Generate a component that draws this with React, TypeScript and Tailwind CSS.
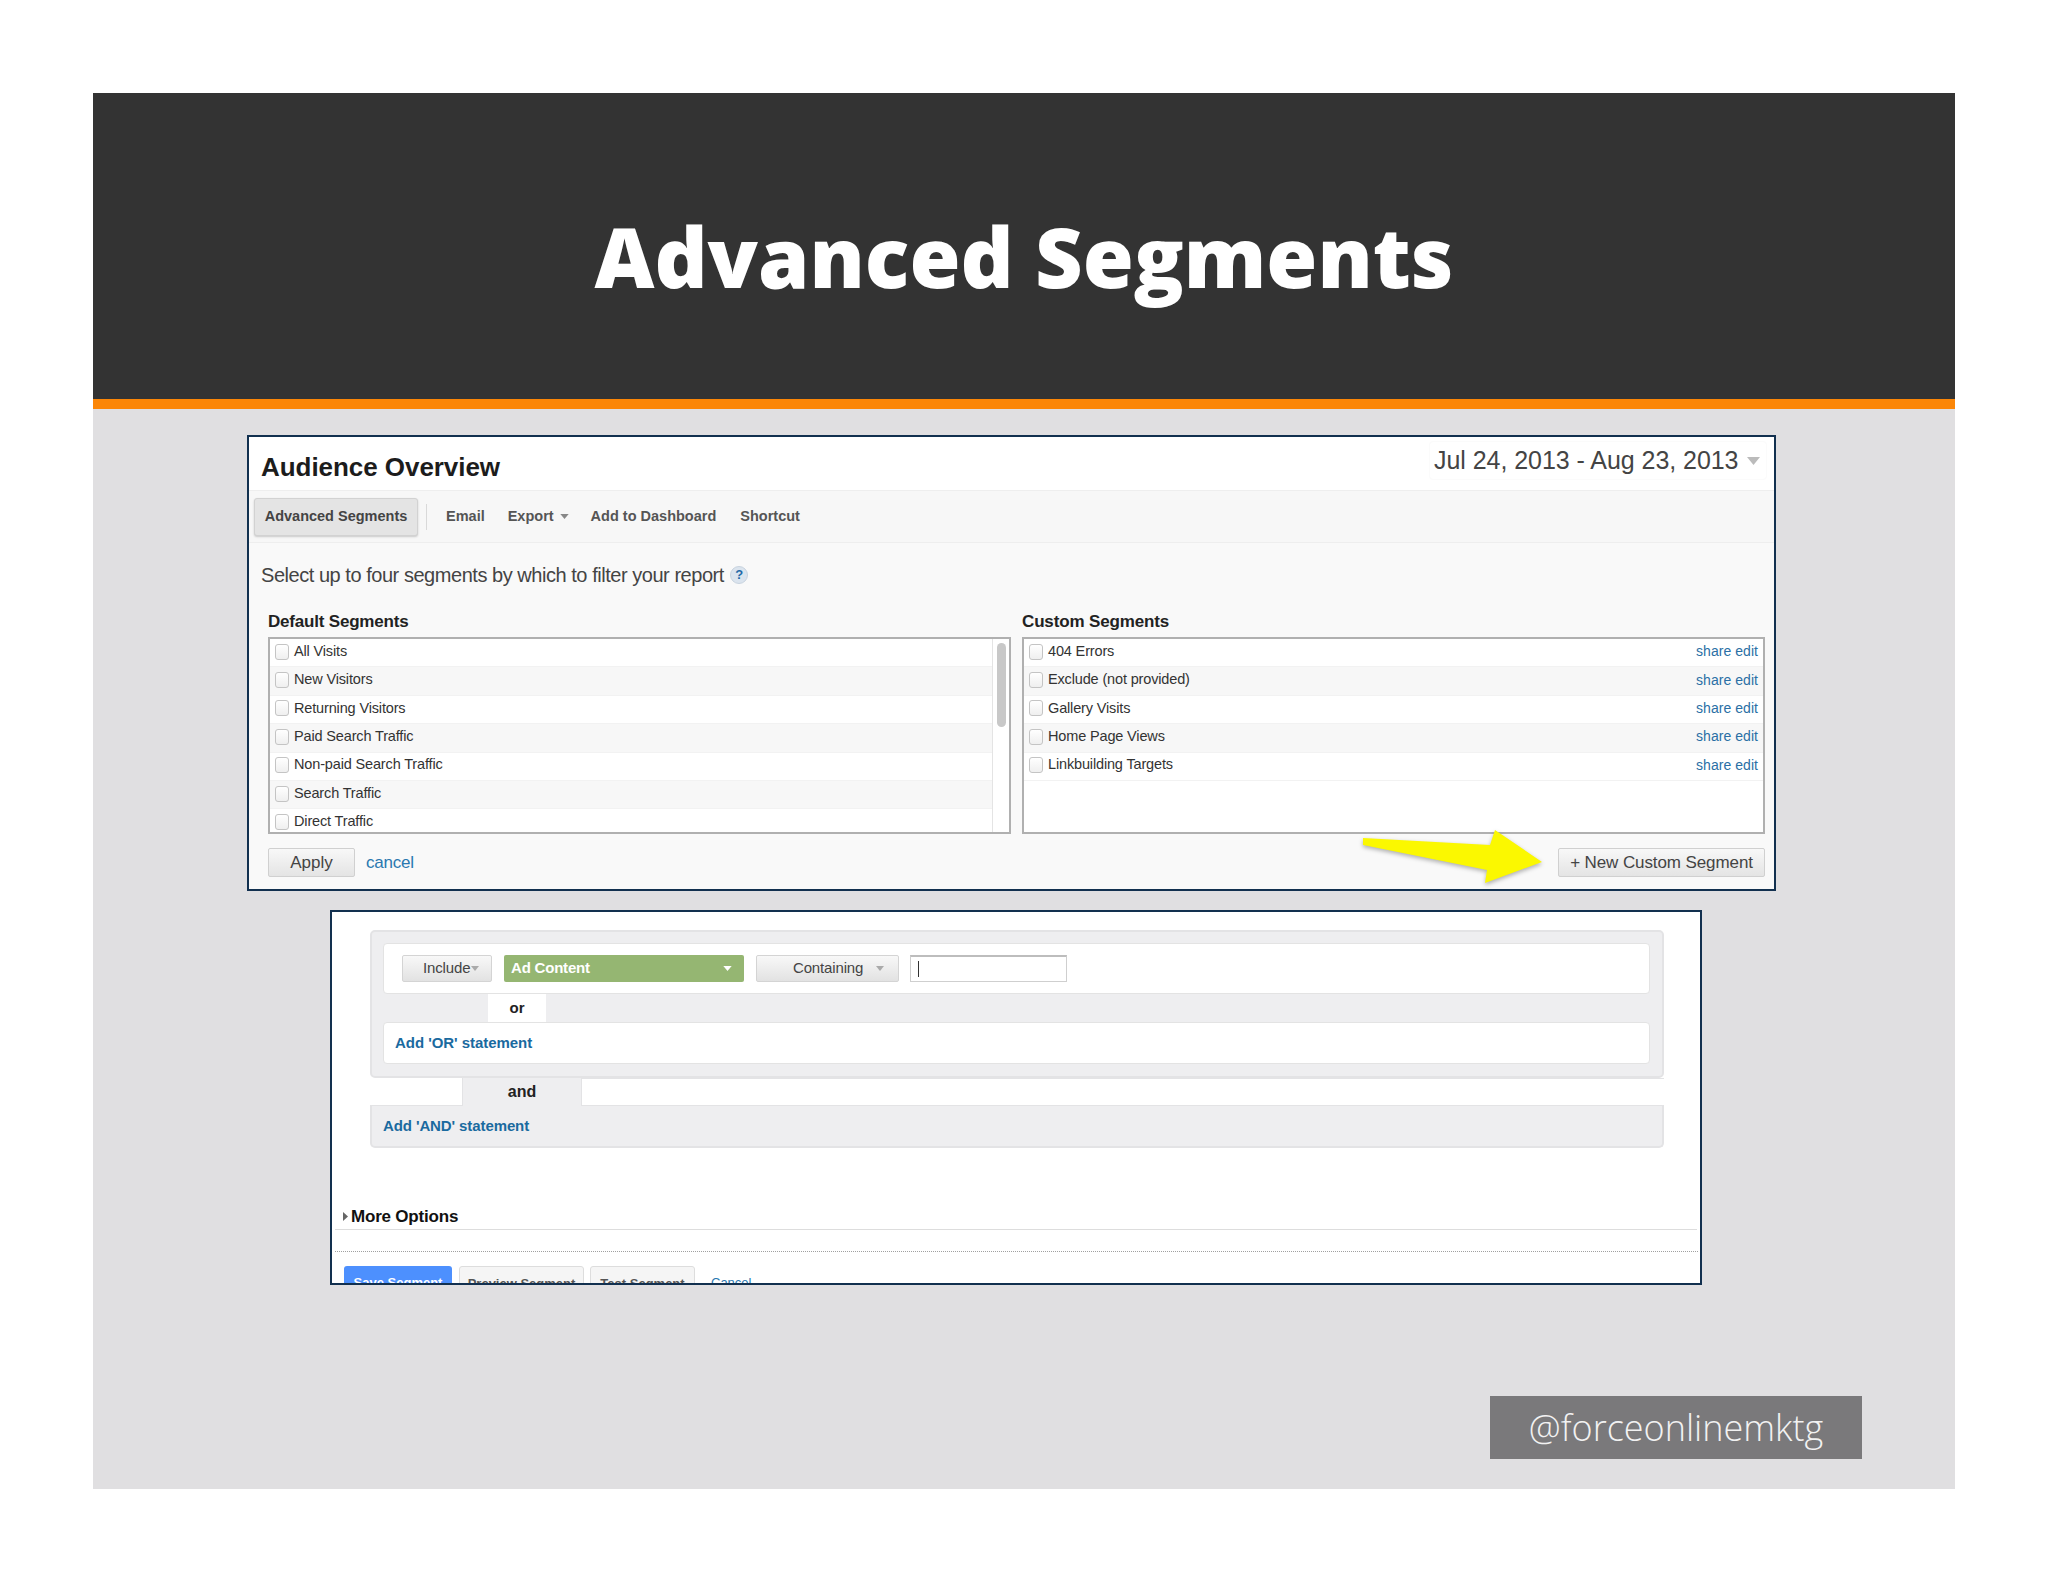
const sans = { fontFamily: '"Liberation Sans", Arial, sans-serif' };

const defaults = ['All Visits', 'New Visitors', 'Returning Visitors', 'Paid Search Traffic', 'Non-paid Search Traffic', 'Search Traffic', 'Direct Traffic'];
const customs = ['404 Errors', 'Exclude (not provided)', 'Gallery Visits', 'Home Page Views', 'Linkbuilding Targets'];

function Caret({ color = '#888', w = 10, h = 6 }: { color?: string; w?: number; h?: number }) {
  return (
    <svg width={w} height={h} viewBox="0 0 10 6" className="shrink-0">
      <polygon points="0,0 10,0 5,6" fill={color} />
    </svg>
  );
}

function Check() {
  return <span className="block w-[14px] h-[16px] shrink-0 rounded-[3px] border border-[#c4c4c4] bg-gradient-to-b from-white to-[#efefef]" />;
}

function Row({ label, odd, actions }: { label: string; odd: boolean; actions?: boolean }) {
  return (
    <div className={`h-[28.4px] flex items-center pb-[2px] pl-[5px] pr-[5px] border-b border-[#f2f2f2] ${odd ? 'bg-[#f7f7f7]' : 'bg-white'}`}>
      <Check />
      <span className="ml-[5px] text-[14.5px] tracking-[-0.15px] text-[#333]">{label}</span>
      {actions && <span className="ml-auto text-[14px] tracking-[0.05px] text-[#2a6fa5]">share edit</span>}
    </div>
  );
}

function AudiencePanel() {
  return (
    <div className="relative w-[1529px] h-[456px] ml-[154px] mt-[26px] border-2 border-[#12304f] bg-[#f9f9f9] overflow-hidden" style={sans}>
      <div className="h-[53px] bg-white flex justify-between pl-[12px] pr-[8px]">
        <h2 className="mt-[15px] text-[26px] leading-[30px] font-bold tracking-[-0.05px] text-[#1c1c1c]">Audience Overview</h2>
        <div className="mt-[5px] h-[37px] w-[336px] flex items-center pl-[4px] rounded-[3px] shadow-[0_0_2px_#eee]">
          <span className="text-[25px] tracking-[-0.05px] text-[#444]">Jul 24, 2013 - Aug 23, 2013</span>
          <span className="ml-auto mr-[6px]"><Caret color="#bbb" w={13} h={8} /></span>
        </div>
      </div>
      <div className="h-[53px] bg-[#f7f7f7] border-y border-[#eeeeee] flex items-center pl-[5px] text-[14.5px] font-bold text-[#555]">
        <div className="w-[164px] h-[38px] flex items-center justify-center rounded-[3px] border border-[#d2d2d2] bg-[#e4e4e4] shadow-[0_1px_2px_#c9c9c9] text-[#444]">Advanced Segments</div>
        <div className="w-px h-[26px] bg-[#d9d9d9] ml-[8px]" />
        <span className="ml-[19px]">Email</span>
        <span className="ml-[23px]">Export</span>
        <span className="ml-[6px]"><Caret color="#888" w={9} h={5} /></span>
        <span className="ml-[22px]">Add to Dashboard</span>
        <span className="ml-[24px]">Shortcut</span>
      </div>
      <div className="pl-[12px] mt-[20px] h-[24px] flex items-center text-[20px] tracking-[-0.46px] text-[#444]">
        Select up to four segments by which to filter your report
        <span className="ml-[6px] w-[18px] h-[18px] rounded-full bg-[#dbe4ee] border border-[#c8d3df] flex items-center justify-center text-[13px] font-bold text-[#1f6aa8]">?</span>
      </div>
      <div className="mt-[25px] ml-[19px] flex gap-[11px]">
        <div className="w-[743px]">
          <div className="h-[20px] leading-[20px] text-[17px] font-bold tracking-[-0.2px] text-[#222]">Default Segments</div>
          <div className="relative mt-[5px] h-[197px] border-2 border-[#b0b0b0] bg-white overflow-hidden">
            <div className="w-[723px] border-r border-[#e4e4e4] h-full">
              {defaults.map((d, i) => <Row key={d} label={d} odd={i % 2 === 1} />)}
            </div>
            <div className="absolute right-[3px] top-[4px] w-[9px] h-[84px] rounded-full bg-[#c8c8c8]" />
          </div>
        </div>
        <div className="w-[743px]">
          <div className="h-[20px] leading-[20px] text-[17px] font-bold tracking-[-0.15px] text-[#222]">Custom Segments</div>
          <div className="mt-[5px] h-[197px] border-2 border-[#b0b0b0] bg-white overflow-hidden">
            {customs.map((c, i) => <Row key={c} label={c} odd={i % 2 === 1} actions />)}
          </div>
        </div>
      </div>
      <div className="mt-[14px] ml-[19px] w-[1497px] flex items-center">
        <div className="w-[87px] h-[29px] flex items-center justify-center rounded-[2px] border border-[#d0d0d0] bg-gradient-to-b from-[#f8f8f8] to-[#e4e4e4] text-[17px] text-[#444]">Apply</div>
        <span className="ml-[11px] text-[17px] tracking-[-0.2px] text-[#2a78b0]">cancel</span>
        <div className="ml-auto w-[207px] h-[29px] flex items-center justify-center rounded-[2px] border border-[#d0d0d0] bg-gradient-to-b from-[#f8f8f8] to-[#e4e4e4] text-[17px] tracking-[-0.1px] text-[#444]">+ New Custom Segment</div>
      </div>
      <svg width="190" height="62" viewBox="0 0 190 62" className="absolute left-[1105px] top-[388px] drop-shadow-[0_2px_2px_rgba(0,0,0,0.3)]">
        <polygon points="9,13 136,20 141,5 188,37 131,58 133,45 9,20" fill="#fbf800" />
      </svg>
    </div>
  );
}

function GrayButton({ label, className, caretGap }: { label: string; className: string; caretGap: string }) {
  return (
    <div className={`h-[27px] flex items-center rounded-[2px] border border-[#d4d4d4] bg-gradient-to-b from-[#f8f8f8] to-[#e2e2e2] text-[15px] tracking-[-0.15px] text-[#444] ${className}`}>
      {label}
      <span className={caretGap}><Caret color="#aaa" w={8} h={5} /></span>
    </div>
  );
}

function BuilderPanel() {
  return (
    <div className="w-[1372px] h-[375px] ml-[237px] mt-[19px] border-2 border-[#12304f] bg-white overflow-hidden" style={sans}>
      <div className="ml-[38px] mt-[18px] w-[1294px] h-[148px] rounded-[5px] border-2 border-[#e3e3e5] bg-[#eeeef0] pl-[11px] pt-[11px]">
        <div className="w-[1267px] h-[51px] rounded-[4px] bg-white border border-[#e3e3e3] flex items-center pl-[18px]">
          <GrayButton label="Include" caretGap="ml-[1px]" className="w-[90px] pl-[20px]" />
          <div className="ml-[12px] w-[240px] h-[27px] flex items-center pl-[7px] pr-[12px] rounded-[2px] bg-[#95b672] text-[15px] font-bold tracking-[-0.2px] text-white">
            Ad Content
            <span className="ml-auto"><Caret color="#fff" w={9} h={5} /></span>
          </div>
          <GrayButton label="Containing" caretGap="ml-[13px]" className="ml-[12px] w-[143px] pl-[36px]" />
          <div className="ml-[11px] w-[157px] h-[27px] flex items-center pl-[7px] border border-[#cfcfcf] border-t-2 border-t-[#bdbdbd] bg-white">
            <span className="block w-px h-[16px] bg-[#333]" />
          </div>
        </div>
        <div className="h-[28px] flex">
          <div className="ml-[105px] w-[58px] h-[28px] bg-white flex items-center justify-center text-[15px] font-bold text-[#222]">or</div>
        </div>
        <div className="w-[1267px] h-[42px] rounded-[4px] bg-white border border-[#e3e3e3] flex items-center pl-[11px] text-[15px] font-bold tracking-[-0.05px] text-[#1a6a9f]">Add 'OR' statement</div>
      </div>
      <div className="ml-[38px] w-[1294px] h-[28px] flex">
        <div className="w-[93px] bg-white border-r border-b border-[#e3e3e5]" />
        <div className="w-[118px] bg-[#eeeef0] flex items-center justify-center text-[16px] font-bold text-[#222]">and</div>
        <div className="flex-1 bg-white border-l border-t border-b border-[#e3e3e5]" />
      </div>
      <div className="ml-[38px] w-[1294px] h-[42px] rounded-b-[5px] border-2 border-t-0 border-[#e3e3e5] bg-[#eeeef0] flex items-center pl-[11px] text-[15px] font-bold tracking-[-0.1px] text-[#1a6a9f]">Add 'AND' statement</div>
      <div className="mt-[59px] ml-[3px] mr-[3px] h-[23px] border-b border-[#dddddd] flex items-center pb-[3px] pl-[8px] text-[17px] font-bold tracking-[-0.2px] text-[#111]">
        <svg width="5" height="9" viewBox="0 0 5 9" className="mr-[3px]"><polygon points="0,0 5,4.5 0,9" fill="#666" /></svg>
        More Options
      </div>
      <div className="mt-[21px] ml-[3px] mr-[2px] border-t border-dotted border-[#a0a0a0]" />
      <div className="mt-[14px] ml-[12px] flex items-start text-[13px] font-bold">
        <div className="w-[108px] h-[30px] pt-[7px] text-center rounded-t-[3px] bg-[#4d90fe] text-white">Save Segment</div>
        <div className="ml-[7px] w-[125px] h-[30px] pt-[7px] text-center rounded-t-[3px] border border-[#ddd] bg-[#f5f5f5] text-[#555]">Preview Segment</div>
        <div className="ml-[6px] w-[105px] h-[30px] pt-[7px] text-center rounded-t-[3px] border border-[#ddd] bg-[#f5f5f5] text-[#555]">Test Segment</div>
        <div className="ml-[16px] pt-[7px] font-normal text-[#2a78b0]">Cancel</div>
      </div>
    </div>
  );
}

export default function App() {
  return (
    <div className="w-[2048px] h-[1582px] bg-white pt-[93px] pl-[93px]">
      <div className="w-[1862px] h-[1396px] bg-[#e0dfe1] flex flex-col">
        <div className="h-[306px] bg-[#333333] flex items-center justify-center pt-[20px]">
          <h1 className="text-[82.6px] font-extrabold leading-none text-white" style={{ fontFamily: '"Open Sans", sans-serif' }}>Advanced Segments</h1>
        </div>
        <div className="h-[10px] bg-[#fb8607]" />
        <AudiencePanel />
        <BuilderPanel />
        <div className="self-end mt-[111px] mr-[93px] w-[372px] h-[63px] bg-[#7a797b] flex items-center justify-center text-[36px] font-light text-[#f2f2f2]" style={{ fontFamily: '"Open Sans", sans-serif' }}>
          @forceonlinemktg
        </div>
      </div>
    </div>
  );
}
